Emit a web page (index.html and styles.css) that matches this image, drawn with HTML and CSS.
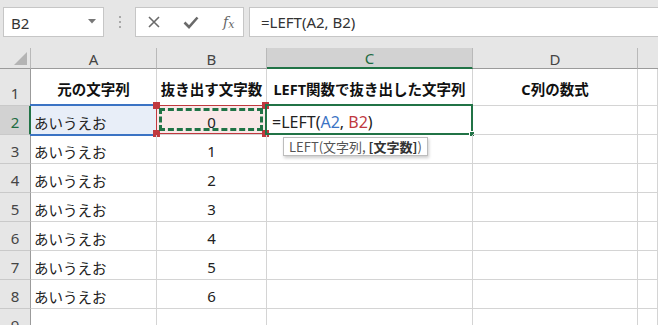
FILE: index.html
```html
<!DOCTYPE html>
<html lang="ja">
<head>
<meta charset="utf-8">
<link rel="stylesheet" href="styles.css">
</head>
<body>
<div class="app">
  <div class="fbar">
    <div class="namebox">
      <span class="nb-text">B2</span>
      <svg class="nb-arrow" width="8" height="5" viewBox="0 0 8 5"><path d="M0 0H8L4 4.5Z" fill="#777"/></svg>
    </div>
    <div class="dots"><span></span><span></span><span></span></div>
    <div class="btns">
      <svg class="ic" width="14" height="14" viewBox="0 0 14 14"><path d="M2 2L12 12M12 2L2 12" stroke="#6a6a6a" stroke-width="1.6" fill="none"/></svg>
      <svg class="ic" width="16" height="14" viewBox="0 0 16 14"><path d="M1.5 7.5L6 12L14.5 2.5" stroke="#6a6a6a" stroke-width="2.6" fill="none"/></svg>
      <span class="fx">f<sub>x</sub></span>
    </div>
    <div class="finput">=LEFT(A2, B2)</div>
  </div>
  <div class="grid">
    <div class="corner"><span class="tri"></span></div>
    <div class="ch">A</div>
    <div class="ch">B</div>
    <div class="ch sel">C</div>
    <div class="ch">D</div>
    <div class="ch last"></div>

    <div class="rh">1</div>
    <div class="c head">元の文字列</div>
    <div class="c head">抜き出す文字数</div>
    <div class="c head">LEFT関数で抜き出した文字列</div>
    <div class="c head">C列の数式</div>
    <div class="c"></div>

    <div class="rh sel">2</div>
    <div class="c txt a2">あいうえお<span class="ref-blue"></span></div>
    <div class="c num b2">0<span class="ref-red"><i class="k tl"></i><i class="k tr"></i><i class="k bl"></i><i class="k br"></i></span><span class="ants"></span></div>
    <div class="c txt c2"><span class="formula">=LEFT(<span class="blue">A2</span>, <span class="red">B2</span>)</span><span class="active"><i class="fill"></i></span><div class="tip">LEFT(文字列, <b>[文字数]</b>)</div></div>
    <div class="c"></div>
    <div class="c"></div>

    <div class="rh">3</div><div class="c txt">あいうえお</div><div class="c num">1</div><div class="c"></div><div class="c"></div><div class="c"></div>
    <div class="rh">4</div><div class="c txt">あいうえお</div><div class="c num">2</div><div class="c"></div><div class="c"></div><div class="c"></div>
    <div class="rh">5</div><div class="c txt">あいうえお</div><div class="c num">3</div><div class="c"></div><div class="c"></div><div class="c"></div>
    <div class="rh">6</div><div class="c txt">あいうえお</div><div class="c num">4</div><div class="c"></div><div class="c"></div><div class="c"></div>
    <div class="rh">7</div><div class="c txt">あいうえお</div><div class="c num">5</div><div class="c"></div><div class="c"></div><div class="c"></div>
    <div class="rh">8</div><div class="c txt">あいうえお</div><div class="c num">6</div><div class="c"></div><div class="c"></div><div class="c"></div>
    <div class="rh">9</div><div class="c"></div><div class="c"></div><div class="c"></div><div class="c"></div><div class="c"></div>
  </div>
</div>
</body>
</html>
```
FILE: styles.css
```css
* { box-sizing: border-box; }
html, body { margin: 0; padding: 0; }
body {
  width: 658px; height: 325px; overflow: hidden;
  background: #fff;
  font-family: "Noto Sans", "Noto Sans CJK JP", sans-serif;
  color: #222;
}
.app { width: 658px; height: 325px; overflow: hidden; }

.fbar {
  height: 48px;
  background: #e6e6e6;
  display: flex;
  align-items: flex-start;
  padding-top: 7px;
  padding-left: 3px;
}
.namebox {
  width: 101px; height: 30px;
  background: #fff;
  border: 1px solid #c6c6c6;
  display: flex; align-items: center; justify-content: space-between;
  padding: 0 7px 0 7px;
}
.nb-text { font-size: 15px; color: #333; padding-top: 2px; }
.nb-arrow { margin-top: -2px; }
.dots {
  width: 31px; height: 30px;
  display: flex; flex-direction: column; align-items: center; justify-content: center; gap: 3px;
}
.dots span { width: 2px; height: 2px; background: #a8a8a8; display: block; }
.btns {
  width: 109px; height: 30px;
  background: #fff;
  border: 1px solid #c6c6c6;
  display: flex; align-items: center;
  padding-left: 11px; gap: 22px;
}
.fx { font-family: "DejaVu Serif", "Liberation Serif", serif; font-style: italic; font-size: 14px; color: #666; margin-left: 2px; }
.fx sub { font-size: 11px; vertical-align: -1px; }
.finput {
  flex: 1; height: 30px; margin-left: 5px;
  background: #fff;
  border: 1px solid #c6c6c6; border-right: none;
  font-size: 15px; color: #333;
  padding: 4px 0 0 11px;
}

.grid {
  display: grid;
  grid-template-columns: 31px 126px 110px 206px 165px 1fr;
  grid-template-rows: 21px 37px 29px 29px 29px 29px 29px 29px 29px 29px;
}
.corner, .ch {
  background: #e6e6e6;
  border-right: 1px solid #b9b9b9;
  border-bottom: 1px solid #9b9b9b;
}
.corner { position: relative; }
.tri {
  position: absolute; right: 3px; bottom: 3px;
  width: 0; height: 0;
  border-left: 13px solid transparent;
  border-bottom: 13px solid #b4b4b4;
}
.ch {
  display: flex; align-items: center; justify-content: center;
  font-size: 15px; color: #444; padding-top: 1px;
}
.ch.sel { background: #d2d2d2; color: #1e6b41; border-bottom: 2px solid #217346; }
.ch.last { border-right: none; }
.rh {
  background: #e6e6e6;
  border-right: 1px solid #9b9b9b;
  border-bottom: 1px solid #c9c9c9;
  display: flex; align-items: flex-end; justify-content: center;
  font-size: 15px; color: #444; padding-bottom: 2px;
}
.rh.sel { background: #d2d2d2; color: #1e6b41; border-right: 2px solid #217346; padding-left: 1px; }
.c {
  border-right: 1px solid #d4d4d4;
  border-bottom: 1px solid #d4d4d4;
  display: flex; align-items: center;
  font-size: 15px; color: #222;
  position: relative;
}
.head { justify-content: center; font-weight: bold; font-size: 14.5px; color: #111; padding-top: 2px; }
.txt { padding: 4px 0 0 3px; font-family: "Noto Sans CJK JP", sans-serif; font-size: 14.5px; }
.num { justify-content: center; padding-top: 3px; }

.a2 { background: #e8eef8; }
.ref-blue {
  position: absolute; left: -1px; top: -2px; right: -1px; bottom: -2px;
  border-top: 2px solid #3b73c4; border-bottom: 2px solid #3b73c4;
}
.b2 { background: #f9e8e8; }
.ref-red {
  position: absolute; left: -1px; top: -1px; right: 0; bottom: 0;
  border: 1px solid #c0393f;
}
.k { position: absolute; width: 7px; height: 7px; background: #c0393f; display: block; }
.k.tl { left: -4px; top: -4px; }
.k.tr { right: -4px; top: -4px; }
.k.bl { left: -4px; bottom: -4px; }
.k.br { right: -4px; bottom: -4px; }
.ants {
  position: absolute; left: 2px; top: 2px; right: 3px; bottom: 3px;
  border: 3px dashed #217346;
}
.c2 { padding-left: 5px; }
.formula { font-family: "Noto Sans", sans-serif; font-size: 16px; color: #222; }
.blue { color: #3b73c4; }
.red { color: #c0393f; }
.active {
  position: absolute; left: -2px; top: -2px; right: -1px; bottom: -1px;
  border: 2px solid #217346;
}
.fill {
  position: absolute; right: -4px; bottom: -4px;
  width: 6px; height: 6px; background: #217346; border: 1px solid #fff; display: block;
}
.tip {
  position: absolute; left: 16px; top: 31px;
  height: 19px;
  background: #fff;
  border: 1px solid #bdbdbd;
  box-shadow: 1px 2px 3px rgba(0,0,0,0.2);
  font-size: 13px; color: #555;
  padding: 0 5px; line-height: 17px;
  white-space: nowrap; z-index: 2;
}
.tip b { color: #333; }
```
